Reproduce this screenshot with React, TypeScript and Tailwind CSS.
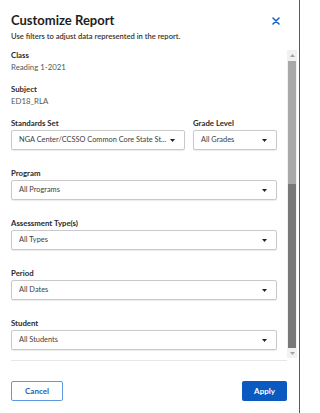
import React from "react";

const font = { fontFamily: "Lato, 'Open Sans', sans-serif" };

function Caret() {
  return (
    <svg width="5" height="3" viewBox="0 0 5 3" className="shrink-0">
      <path d="M0 0h5L2.5 3z" fill="#222" />
    </svg>
  );
}

function Select(props: { value: string; className?: string }) {
  return (
    <div
      className={`flex h-[20px] items-center justify-between gap-[4px] rounded-[2px] border border-[#c9c9c9] bg-white pl-[7px] pr-[9px] shadow-[0_1px_1px_rgba(0,0,0,0.08)] ${
        props.className ?? ""
      }`}
    >
      <span className="whitespace-nowrap text-[7.4px] leading-[10px] text-[#3d3d3d]">
        {props.value}
      </span>
      <Caret />
    </div>
  );
}

function Field(props: { label: string; value: string; className?: string }) {
  return (
    <div className={`flex flex-col gap-[2px] ${props.className ?? ""}`}>
      <div className="text-[7.8px] font-bold leading-[10px] text-[#2a2a2a]">
        {props.label}
      </div>
      <Select value={props.value} />
    </div>
  );
}

function Info(props: { label: string; value: string }) {
  return (
    <div className="flex flex-col gap-[2px]">
      <div className="text-[7.8px] font-bold leading-[10px] text-[#2a2a2a]">
        {props.label}
      </div>
      <div className="text-[7.8px] leading-[10px] text-[#4f5a5a]">
        {props.value}
      </div>
    </div>
  );
}

export default function App() {
  return (
    <div className="flex h-[413px] w-[300px] bg-white" style={font}>
      <div className="flex w-[299px] flex-col">
        {/* header */}
        <div className="flex items-start justify-between pl-[11px] pr-[19px] pt-[11px]">
          <div className="flex flex-col">
            <h1 className="text-[13px] font-bold leading-[18px] text-[#1e1e1e]">
              Customize Report
            </h1>
            <p className="mt-[3px] text-[7.6px] font-semibold leading-[9px] text-[#333]">
              Use filters to adjust data represented in the report.
            </p>
          </div>
          <svg width="8" height="8" viewBox="0 0 8 8" className="mt-[6px]">
            <path
              d="M1 1l6 6M7 1L1 7"
              stroke="#1764c4"
              strokeWidth="1.6"
              strokeLinecap="round"
            />
          </svg>
        </div>

        {/* scroll area */}
        <div className="mt-[9px] flex h-[308px]">
          <div className="flex w-[277px] flex-col pl-[11px]">
            <div className="flex flex-col gap-[12px]">
              <Info label="Class" value="Reading 1-2021" />
              <Info label="Subject" value="ED18_RLA" />
            </div>
            <div className="mt-[12px] flex flex-col gap-[18px]">
              <div className="flex gap-[8px]">
                <Field
                  label="Standards Set"
                  value="NGA Center/CCSSO Common Core State St..."
                  className="w-[174px]"
                />
                <Field label="Grade Level" value="All Grades" className="w-[84px]" />
              </div>
              <Field label="Program" value="All Programs" />
              <Field label="Assessment Type(s)" value="All Types" />
              <Field label="Period" value="All Dates" />
              <Field label="Student" value="All Students" />
            </div>
          </div>
          {/* scrollbar */}
          <div className="ml-[10px] flex w-[10px] flex-col bg-[#f1f1f1]">
            <div className="flex h-[11px] items-center justify-center">
              <svg width="5" height="3" viewBox="0 0 5 3">
                <path d="M0 3h5L2.5 0z" fill="#a3a3a3" />
              </svg>
            </div>
            <div className="mx-[1px] h-[123px] bg-[#a9a9a9]" />
            <div className="mx-[1px] h-[164px] bg-[#787878]" />
            <div className="flex h-[10px] items-center justify-center">
              <svg width="5" height="3" viewBox="0 0 5 3">
                <path d="M0 0h5L2.5 3z" fill="#a3a3a3" />
              </svg>
            </div>
          </div>
        </div>

        <div className="ml-[11px] mr-[12px] mt-[2px] h-px bg-[#e6e6e6]" />

        {/* footer */}
        <div className="mt-[20px] flex items-center justify-between pl-[11px] pr-[12px]">
          <button className="h-[20px] w-[52px] rounded-[2px] border border-[#5b9be0] bg-white text-[8px] font-bold text-[#1d5fb8]">
            Cancel
          </button>
          <button className="h-[20px] w-[45px] rounded-[2px] bg-[#0a5ac0] text-[8px] font-bold text-white">
            Apply
          </button>
        </div>
      </div>
      <div className="w-px bg-[#5a5a5a]" />
    </div>
  );
}
